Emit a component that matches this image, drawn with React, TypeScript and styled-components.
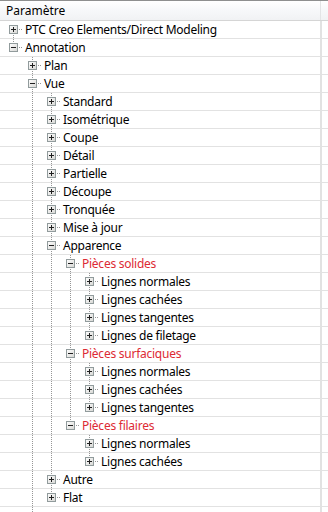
import React from "react";
import styled, { createGlobalStyle } from "styled-components";

const Global = createGlobalStyle`
  html, body { margin: 0; padding: 0; background: #ffffff; }
  body { font-family: "Noto Sans", "Segoe UI", Tahoma, sans-serif; font-size: 12px; color: #000; }
`;

const DOT = "#969696";
const GRID = "#e2e2e2";
const COL_W = 19;

const Panel = styled.div`
  width: 328px;
  height: 512px;
  overflow: hidden;
  background: #fff;
  display: flex;
  flex-direction: column;
`;

const Header = styled.div`
  height: 19px;
  flex: none;
  display: flex;
  border-top: 1px solid #8e8f8f;
  border-bottom: 1px solid #d5d5d5;
  background: linear-gradient(to bottom, #ffffff 0%, #f7f8fa 45%, #f1f2f4 100%);
`;

const HeaderCell = styled.div`
  width: 321px;
  box-sizing: border-box;
  border-right: 1px solid #e3e4e6;
  display: flex;
  align-items: center;
  padding-left: 6px;
  line-height: 17px;
`;

const Row = styled.div`
  height: 18px;
  flex: none;
  box-sizing: border-box;
  border-bottom: 1px solid ${GRID};
  display: flex;
`;

const TreeCell = styled.div`
  width: 322px;
  box-sizing: border-box;
  border-right: 2px solid ${GRID};
  display: flex;
  padding-left: 4px;
`;

const vDots = `repeating-linear-gradient(to bottom, ${DOT} 0 1px, transparent 1px 2px)`;
const hDots = `repeating-linear-gradient(to right, ${DOT} 0 1px, transparent 1px 2px)`;

type ColProps = { $through?: boolean; $up?: boolean; $down?: boolean; $horiz?: boolean };

const Column = styled.span<ColProps>`
  width: ${COL_W}px;
  flex: none;
  display: flex;
  align-items: center;
  background-repeat: no-repeat;
  background-image: ${(p) =>
    [
      p.$through ? vDots : null,
      p.$up ? vDots : null,
      p.$down ? vDots : null,
      p.$horiz ? hDots : null,
    ]
      .filter(Boolean)
      .join(", ") || "none"};
  background-position: ${(p) =>
    [
      p.$through ? "9px 0" : null,
      p.$up ? "9px 0" : null,
      p.$down ? "9px 8px" : null,
      p.$horiz ? "11px 8px" : null,
    ]
      .filter(Boolean)
      .join(", ") || "0 0"};
  background-size: ${(p) =>
    [
      p.$through ? "1px 100%" : null,
      p.$up ? "1px 8px" : null,
      p.$down ? "1px 9px" : null,
      p.$horiz ? "8px 1px" : null,
    ]
      .filter(Boolean)
      .join(", ") || "auto"};
`;

const BoxWrap = styled.span`
  display: flex;
  margin-left: 5px;
  width: 9px;
  height: 9px;
`;

const Label = styled.span<{ $red?: boolean }>`
  padding-left: 2px;
  line-height: 17px;
  letter-spacing: -0.25px;
  white-space: nowrap;
  color: ${(p) => (p.$red ? "#dd2a34" : "#000")};
`;

const Filler = styled.div`
  flex: 1;
  display: flex;
`;

const Expander = ({ open }: { open: boolean }) => (
  <BoxWrap>
    <svg width="9" height="9" viewBox="0 0 9 9">
      <defs>
        <linearGradient id="bx" x1="0" y1="0" x2="1" y2="1">
          <stop offset="0" stopColor="#ffffff" />
          <stop offset="1" stopColor="#d6d6d3" />
        </linearGradient>
      </defs>
      <rect x="0.5" y="0.5" width="8" height="8" fill="url(#bx)" stroke="#919b9c" />
      <rect x="2" y="4" width="5" height="1" fill="#1f1f1f" />
      {!open && <rect x="4" y="2" width="1" height="5" fill="#1f1f1f" />}
    </svg>
  </BoxWrap>
);

type Node = { d: number; label: string; open?: boolean; red?: boolean; moreAfter?: boolean };

const nodes: Node[] = [
  { d: 0, label: "PTC Creo Elements/Direct Modeling" },
  { d: 0, label: "Annotation", open: true },
  { d: 1, label: "Plan" },
  { d: 1, label: "Vue", open: true, moreAfter: true },
  { d: 2, label: "Standard" },
  { d: 2, label: "Isométrique" },
  { d: 2, label: "Coupe" },
  { d: 2, label: "Détail" },
  { d: 2, label: "Partielle" },
  { d: 2, label: "Découpe" },
  { d: 2, label: "Tronquée" },
  { d: 2, label: "Mise à jour" },
  { d: 2, label: "Apparence", open: true },
  { d: 3, label: "Pièces solides", open: true, red: true },
  { d: 4, label: "Lignes normales" },
  { d: 4, label: "Lignes cachées" },
  { d: 4, label: "Lignes tangentes" },
  { d: 4, label: "Lignes de filetage" },
  { d: 3, label: "Pièces surfaciques", open: true, red: true },
  { d: 4, label: "Lignes normales" },
  { d: 4, label: "Lignes cachées" },
  { d: 4, label: "Lignes tangentes" },
  { d: 3, label: "Pièces filaires", open: true, red: true },
  { d: 4, label: "Lignes normales" },
  { d: 4, label: "Lignes cachées" },
  { d: 2, label: "Autre" },
  { d: 2, label: "Flat" },
];

const hasNext = (i: number): boolean => {
  const d = nodes[i].d;
  if (nodes[i].moreAfter) return true;
  for (let j = i + 1; j < nodes.length; j++) {
    if (nodes[j].d < d) return false;
    if (nodes[j].d === d) return true;
  }
  return false;
};

const ancestorsNext = (i: number): boolean[] => {
  const d = nodes[i].d;
  const res: boolean[] = new Array(d).fill(false);
  let want = d - 1;
  for (let j = i - 1; j >= 0 && want >= 0; j--) {
    if (nodes[j].d === want) {
      res[want] = hasNext(j);
      want--;
    }
  }
  return res;
};

export default function App() {
  const rows = nodes.map((n, i) => {
    const anc = ancestorsNext(i);
    return (
      <Row key={i}>
        <TreeCell>
          {anc.map((t, k) => (
            <Column key={k} $through={t} />
          ))}
          <Column $up={i !== 0} $down={hasNext(i)} $horiz>
            <Expander open={!!n.open} />
          </Column>
          <Label $red={n.red}>{n.label}</Label>
        </TreeCell>
      </Row>
    );
  });
  return (
    <Panel>
      <Global />
      <Header>
        <HeaderCell>Paramètre</HeaderCell>
      </Header>
      {rows}
      <Filler>
        <TreeCell>
          <Column />
          <Column $through />
        </TreeCell>
      </Filler>
    </Panel>
  );
}
